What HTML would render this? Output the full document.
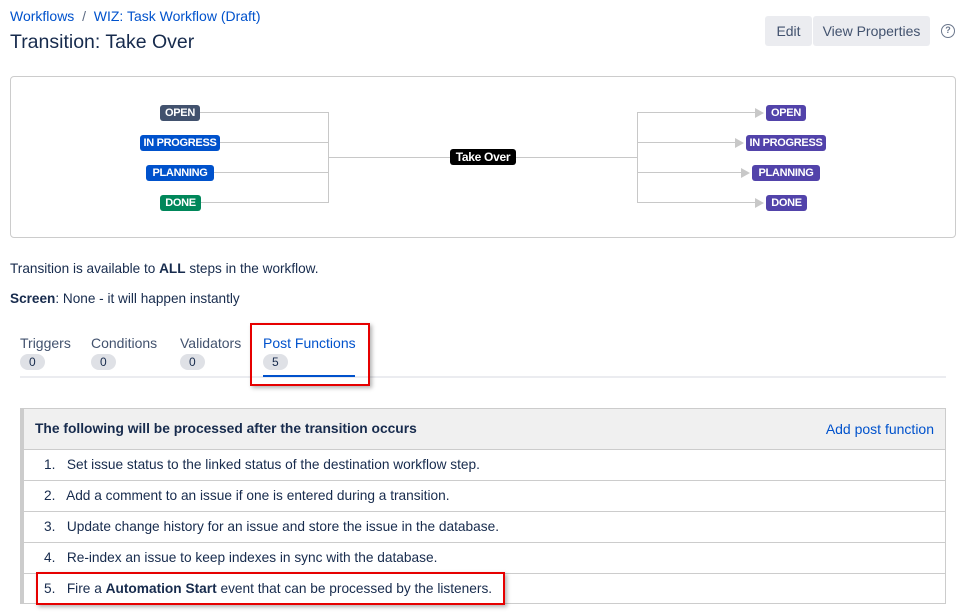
<!DOCTYPE html>
<html><head><meta charset="utf-8"><style>
*{box-sizing:border-box;margin:0;padding:0}
body{width:966px;height:612px;background:#fff;font-family:"Liberation Sans",sans-serif;color:#172b4d;font-size:13.6px;position:relative;overflow:hidden}
.a{position:absolute;white-space:nowrap}
.lz{position:absolute;height:16px;line-height:16px;border-radius:3px;color:#fff;font-weight:bold;font-size:11px;padding:0;white-space:nowrap;letter-spacing:-0.3px;text-align:center}
.hl{position:absolute;height:1px;background:#c8c8c8}
.vl{position:absolute;width:1px;background:#c8c8c8}
.arr{position:absolute;width:0;height:0;border-top:5px solid transparent;border-bottom:5px solid transparent;border-left:9px solid #c8c8c8}
.row{position:absolute;left:24px;width:921px;height:31px;border-top:1px solid #ccc;line-height:30px;padding-left:20px;font-size:13.7px}
.badge{display:inline-block;background:#dfe1e6;border-radius:8px;height:16px;line-height:16px;font-size:12px;padding:0 9px;color:#172b4d}
.tab{font-size:14px;line-height:16px}
</style></head><body>
<div class="a" style="left:10px;top:8px;font-size:14px;color:#0052cc">Workflows <span style="color:#5e6c84">&nbsp;/&nbsp;</span> WIZ: Task Workflow (Draft)</div>
<div class="a" style="left:10px;top:31px;font-size:19.5px;color:#172b4d">Transition: Take Over</div>
<div class="a" style="left:765px;top:16px;width:47px;height:30px;background:#ebecf0;border-radius:3px;line-height:30px;text-align:center;font-size:14px;color:#42526e">Edit</div>
<div class="a" style="left:813px;top:16px;width:117px;height:30px;background:#ebecf0;border-radius:3px;line-height:30px;text-align:center;font-size:14px;color:#42526e">View Properties</div>
<div class="a" style="left:941px;top:24px;width:14px;height:14px;border:1.5px solid #6b778c;border-radius:50%;font-size:9px;line-height:11px;text-align:center;color:#6b778c;font-weight:bold">?</div>

<div class="a" style="left:10px;top:76px;width:946px;height:162px;border:1px solid #ccc;border-radius:4px"></div>
<div class="lz" style="left:160px;top:105px;width:40px;background:#42526e">OPEN</div>
<div class="lz" style="left:140px;top:135px;width:80px;background:#0052cc">IN PROGRESS</div>
<div class="lz" style="left:146px;top:165px;width:68px;background:#0052cc">PLANNING</div>
<div class="lz" style="left:160px;top:195px;width:41px;background:#00875a">DONE</div>
<div class="hl" style="left:200px;top:112px;width:129px"></div>
<div class="hl" style="left:220px;top:142px;width:109px"></div>
<div class="hl" style="left:214px;top:172px;width:115px"></div>
<div class="hl" style="left:201px;top:202px;width:128px"></div>
<div class="vl" style="left:328px;top:112px;height:91px"></div>
<div class="hl" style="left:329px;top:157px;width:121px"></div>
<div class="lz" style="left:450px;top:149px;width:66px;background:#000;font-size:12px">Take Over</div>
<div class="hl" style="left:516px;top:157px;width:121px"></div>
<div class="vl" style="left:637px;top:112px;height:91px"></div>
<div class="hl" style="left:637px;top:112px;width:120px"></div>
<div class="hl" style="left:637px;top:142px;width:100px"></div>
<div class="hl" style="left:637px;top:172px;width:106px"></div>
<div class="hl" style="left:637px;top:202px;width:120px"></div>
<div class="arr" style="left:755px;top:108px"></div>
<div class="arr" style="left:735px;top:138px"></div>
<div class="arr" style="left:741px;top:168px"></div>
<div class="arr" style="left:755px;top:198px"></div>
<div class="lz" style="left:766px;top:105px;width:40px;background:#5243aa">OPEN</div>
<div class="lz" style="left:746px;top:135px;width:80px;background:#5243aa">IN PROGRESS</div>
<div class="lz" style="left:752px;top:165px;width:68px;background:#5243aa">PLANNING</div>
<div class="lz" style="left:766px;top:195px;width:41px;background:#5243aa">DONE</div>

<div class="a" style="left:10px;top:261px">Transition is available to <b>ALL</b> steps in the workflow.</div>
<div class="a" style="left:10px;top:291px"><b>Screen</b>: None - it will happen instantly</div>

<div class="a tab" style="left:20px;top:335px;color:#42526e">Triggers<br><span class="badge" style="margin-top:3px">0</span></div>
<div class="a tab" style="left:91px;top:335px;color:#42526e">Conditions<br><span class="badge" style="margin-top:3px">0</span></div>
<div class="a tab" style="left:180px;top:335px;color:#42526e">Validators<br><span class="badge" style="margin-top:3px">0</span></div>
<div class="a tab" style="left:263px;top:335px;color:#0052cc">Post Functions<br><span class="badge" style="margin-top:3px">5</span></div>
<div class="hl" style="left:20px;top:376px;width:926px;background:#ebecf0;height:2px"></div>
<div class="a" style="left:263px;top:375px;width:92px;height:2px;background:#0052cc"></div>
<div class="a" style="left:250px;top:323px;width:120px;height:63px;border:2px solid #e60000;box-shadow:2px 2px 4px rgba(0,0,0,.3)"></div>

<div class="a" style="left:20px;top:408px;width:926px;height:196px;border:1px solid #ccc;border-left:4px solid #ccc"></div>
<div class="a" style="left:24px;top:409px;width:921px;height:40px;background:#f0f0f0;line-height:40px;padding-left:11px;font-weight:bold;font-size:13.8px">The following will be processed after the transition occurs<span style="position:absolute;right:11px;font-weight:normal;color:#0052cc;font-size:14px">Add post function</span></div>
<div class="row" style="top:449px">1.&nbsp;&nbsp; Set issue status to the linked status of the destination workflow step.</div>
<div class="row" style="top:480px">2.&nbsp;&nbsp; Add a comment to an issue if one is entered during a transition.</div>
<div class="row" style="top:511px">3.&nbsp;&nbsp; Update change history for an issue and store the issue in the database.</div>
<div class="row" style="top:542px">4.&nbsp;&nbsp; Re-index an issue to keep indexes in sync with the database.</div>
<div class="row" style="top:573px">5.&nbsp;&nbsp; Fire a <b>Automation Start</b> event that can be processed by the listeners.</div>
<div class="a" style="left:36px;top:572px;width:469px;height:33px;border:2px solid #e60000;box-shadow:2px 2px 4px rgba(0,0,0,.3)"></div>
</body></html>
